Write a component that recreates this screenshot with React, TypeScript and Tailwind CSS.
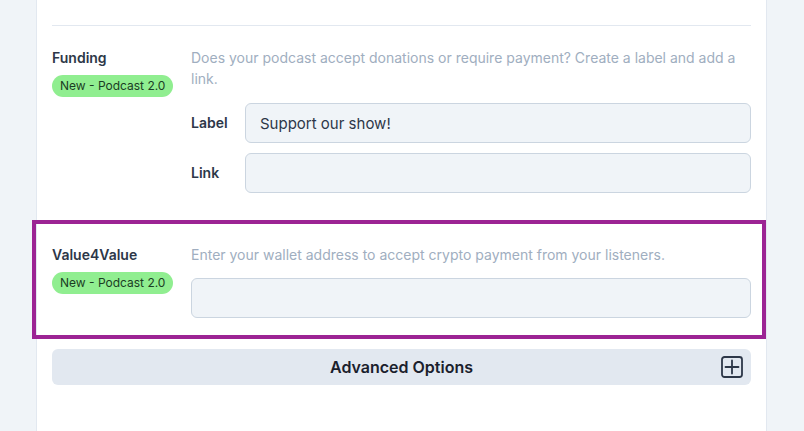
import React from "react";

const font = { fontFamily: "Inter, 'Noto Sans', sans-serif" };

function Badge() {
  return (
    <span className="mt-[7px] inline-block w-fit rounded-full bg-[#90ee90] px-[8px] text-[12px] leading-[22px] text-[#1b3d24]">
      New - Podcast 2.0
    </span>
  );
}

function TextInput({ value = "" }: { value?: string }) {
  return (
    <input
      readOnly
      value={value}
      className="h-[40px] w-full rounded-md border border-[#cbd5e0] bg-[#f0f4f8] px-[14px] text-[15px] text-[#2d3748] outline-none"
    />
  );
}

function PlusSquare() {
  return (
    <svg width="22" height="22" viewBox="0 0 22 22" fill="none" stroke="#2d3748" strokeWidth="1.8" strokeLinecap="round">
      <rect x="1" y="1" width="20" height="20" rx="2.5" />
      <path d="M11 4.5v13M4.5 11h13" />
    </svg>
  );
}

export default function App() {
  return (
    <div className="min-h-screen bg-[#f0f4f8]" style={font}>
      <div className="ml-[36px] min-h-[431px] w-[731px] border-x border-[#e2e8f0] bg-white px-[15px]">
        <div className="h-[26px] border-b border-[#e2e8f0]" />

        {/* Funding */}
        <div className="flex pt-[21px]">
          <div className="flex w-[139px] shrink-0 flex-col">
            <span className="text-sm font-semibold leading-[21px] text-[#2d3748]">Funding</span>
            <Badge />
          </div>
          <div className="flex-1">
            <p className="text-sm leading-[21px] text-[#a0aec0]">
              Does your podcast accept donations or require payment? Create a label and add a link.
            </p>
            <div className="mt-[14px] flex items-center">
              <span className="w-[54px] shrink-0 text-sm font-semibold text-[#2d3748]">Label</span>
              <TextInput value="Support our show!" />
            </div>
            <div className="mt-[10px] flex items-center">
              <span className="w-[54px] shrink-0 text-sm font-semibold text-[#2d3748]">Link</span>
              <TextInput />
            </div>
          </div>
        </div>

        {/* Value4Value (highlighted) */}
        <div className="-ml-[20px] -mr-[15px] mt-[27px] flex border-4 border-[#9c2494] pb-[17px] pl-[16px] pr-[11px] pt-[20px]">
          <div className="flex w-[139px] shrink-0 flex-col">
            <span className="text-sm font-semibold leading-[21px] text-[#2d3748]">Value4Value</span>
            <Badge />
          </div>
          <div className="flex-1">
            <p className="text-sm leading-[21px] text-[#a0aec0]">
              Enter your wallet address to accept crypto payment from your listeners.
            </p>
            <div className="mt-[13px]">
              <TextInput />
            </div>
          </div>
        </div>

        {/* Advanced options */}
        <div className="relative mt-[10px] flex h-[36px] items-center justify-center rounded-md bg-[#e2e8f0]">
          <span className="text-base font-semibold text-[#1a202c]">Advanced Options</span>
          <span className="absolute right-[8px] top-[7px]">
            <PlusSquare />
          </span>
        </div>
      </div>
    </div>
  );
}
